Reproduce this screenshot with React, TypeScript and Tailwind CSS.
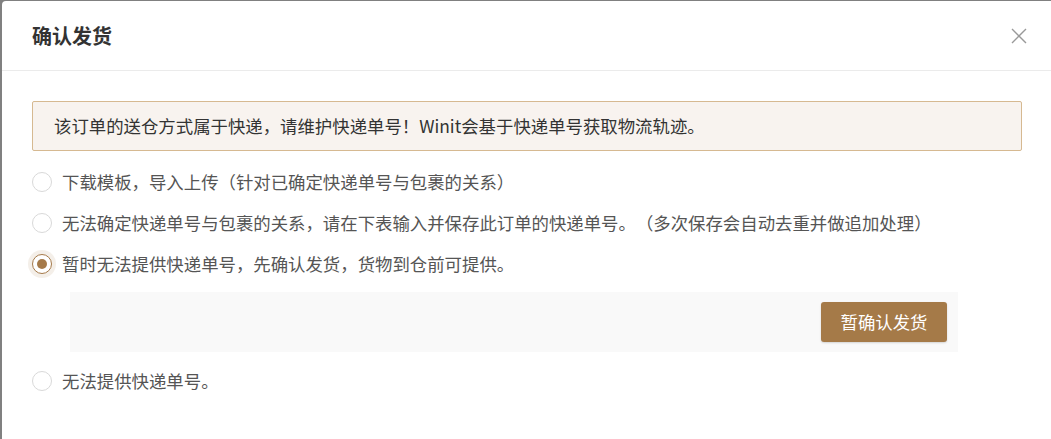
import { useState } from "react";

const options = [
  "下载模板，导入上传（针对已确定快递单号与包裹的关系）",
  "无法确定快递单号与包裹的关系，请在下表输入并保存此订单的快递单号。（多次保存会自动去重并做追加处理）",
  "暂时无法提供快递单号，先确认发货，货物到仓前可提供。",
  "无法提供快递单号。",
];

function Radio({ checked }: { checked: boolean }) {
  if (checked) {
    return (
      <span className="w-5 h-5 shrink-0 rounded-full border-[1.5px] border-[#a57a4a] bg-white flex items-center justify-center shadow-[0_0_0_4px_rgba(165,122,74,0.12)]">
        <span className="w-[10px] h-[10px] rounded-full bg-[#a57a4a]" />
      </span>
    );
  }
  return <span className="w-5 h-5 shrink-0 rounded-full border border-[#d9d9d9] bg-white" />;
}

export default function App() {
  const [selected, setSelected] = useState(2);

  return (
    <div
      className="w-[1051px] h-[439px] bg-[#808080] pl-[2px] pt-[1px] flex overflow-hidden [text-spacing-trim:space-all]"
      style={{ fontFamily: '"Noto Sans CJK SC", "Noto Sans", sans-serif' }}
    >
      <div className="flex-1 bg-white rounded-tl-[4px] flex flex-col">
        {/* --- Header --- */}
        <div className="h-[70px] shrink-0 flex items-center justify-between pl-[30px] pr-[24px] border-b border-[#ebebeb]">
          <span className="text-[20px] leading-none font-bold text-[#333]">确认发货</span>
          <button className="w-4 h-4 flex items-center justify-center text-[#999]">
            <svg width="16" height="16" viewBox="0 0 16 16" fill="none">
              <path d="M1 1L15 15M15 1L1 15" stroke="currentColor" strokeWidth="1.4" />
            </svg>
          </button>
        </div>

        {/* --- Body --- */}
        <div className="pl-[30px] pr-[29px] pt-[30px]">
          <div className="h-[50px] flex items-center pl-[21px] border border-[#d6b991] bg-[#f8f3ef] rounded-[2px] text-[17.4px] leading-none text-[#333]">
            该订单的送仓方式属于快递，请维护快递单号！Winit会基于快递单号获取物流轨迹。
          </div>

          <div className="mt-[10px] flex flex-col">
            {options.map((label, i) => (
              <div key={i}>
                <label
                  onClick={() => setSelected(i)}
                  className="h-[41px] flex items-center gap-[10px] cursor-pointer text-[17.4px] leading-none text-[#555]"
                >
                  <Radio checked={selected === i} />
                  <span>{label}</span>
                </label>
                {i === 2 && selected === 2 && (
                  <div className="ml-[38px] mr-[64px] my-[8px] h-[60px] bg-[#f9f9f9] flex items-center justify-end pr-[11px]">
                    <button className="w-[126px] h-[40px] rounded-[3px] bg-[#a57a48] text-white text-[17.4px] leading-none shadow-[0_1px_2px_rgba(0,0,0,0.15)]">
                      暂确认发货
                    </button>
                  </div>
                )}
              </div>
            ))}
          </div>
        </div>
      </div>
    </div>
  );
}
